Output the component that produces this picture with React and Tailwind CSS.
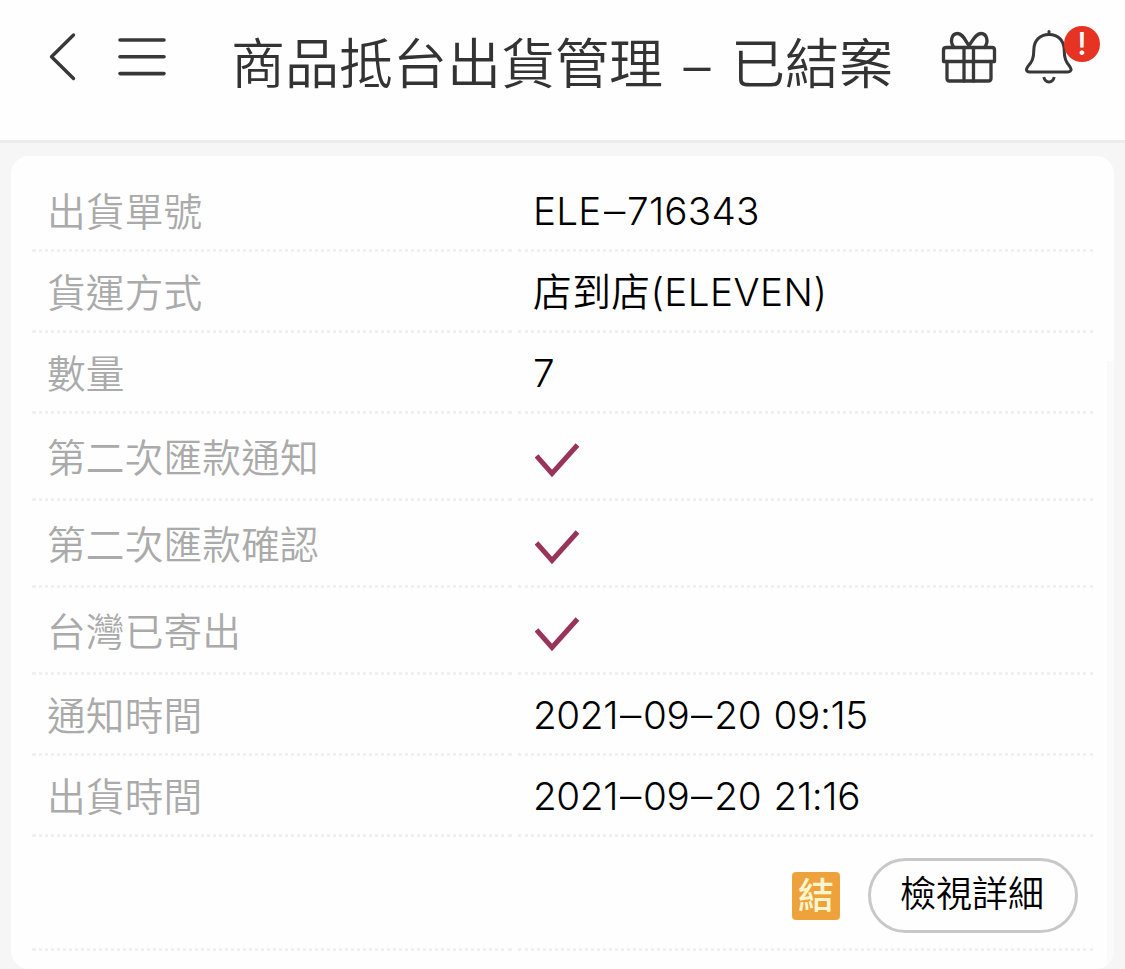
import React from "react";

const rows = [
    { label: "出貨單號", value: "ELE–716343", spacing: "tracking-[0.2px]" },
    { label: "貨運方式", value: "店到店(ELEVEN)", spacing: "tracking-[0.45px]" },
    { label: "數量", value: "7" },
    { label: "第二次匯款通知", done: true },
    { label: "第二次匯款確認", done: true },
    { label: "台灣已寄出", done: true },
    { label: "通知時間", value: "2021–09–20 09:15", spacing: "tracking-[-0.4px] [word-spacing:2px]" },
    { label: "出貨時間", value: "2021–09–20 21:16", spacing: "tracking-[-0.4px] [word-spacing:2px]" },
];

const BackIcon = () => (
    <svg width="28" height="50" viewBox="0 0 28 50" fill="none" stroke="#383838" strokeWidth="3.4" strokeLinecap="round" strokeLinejoin="round">
        <path d="M24.500 3L2.500 24.800L24.500 46.500" />
    </svg>
);

const MenuIcon = () => (
    <svg width="48" height="40" viewBox="0 0 48 40" fill="none" stroke="#383838" strokeWidth="3.6" strokeLinecap="round">
        <path d="M2 3H46M2 19.800H46M2 36.600H46" />
    </svg>
);

const GiftIcon = () => (
    <svg width="56" height="54" viewBox="0 0 56 54" fill="none" stroke="#383838" strokeWidth="3.300" strokeLinecap="round" strokeLinejoin="round">
        <path d="M5.500 18.500H51Q53.500 18.500 53.500 21V32.500H2.500V21Q2.500 18.500 5.500 18.500Z" />
        <path d="M6 32.500V49.500Q6 52 8.500 52H47Q50 52 50 49.500V32.500" />
        <path d="M23 18.500V52M32.500 18.500V52" />
        <path d="M13 18.500C8.500 13 10.500 4.500 16.500 4.500C22 4.500 24 11.500 28 16.500C32 11.500 34.500 4.500 40 4.500C46 4.500 48 13 43.500 18.500" />
    </svg>
);

const BellIcon = () => (
    <svg width="48" height="56" viewBox="0 0 48 56" fill="none" stroke="#383838" strokeWidth="3" strokeLinecap="round" strokeLinejoin="round">
        <path d="M24 6V3.500" />
        <path d="M24 6.500C14.500 6.500 8.800 13 8.800 22C8.800 30.500 7 34 2.800 38.500Q-0.500 43.500 4.500 44H43Q48 43.500 44.800 38.500C41 34 39.200 30.500 39.200 22C39.200 13 33.500 6.500 24 6.500Z" />
        <path d="M18.800 49C20.300 55.500 27.700 55.500 29.200 49" strokeLinecap="butt" />
    </svg>
);

const CheckIcon = () => (
    <svg width="46" height="37" viewBox="0 0 46 37" fill="none" stroke="#98345a" strokeWidth="5">
        <path d="M1.500 14L17 31.500L42.500 3" />
    </svg>
);

function Header() {
    return (
        <header className="flex h-[143px] items-start border-b-[3px] border-[#ebebeb] bg-[#fefefe] pl-[49px] text-[#333333]">
            <button className="mt-8 w-7 shrink-0"><BackIcon /></button>
            <button className="mt-[37px] ml-[41px] w-12 shrink-0"><MenuIcon /></button>
            <h1 className="mt-[25px] ml-[65px] flex h-20 w-[662px] shrink-0 items-center whitespace-nowrap text-[54px] leading-[80px]">
                <span>商品抵台出貨管理</span>
                <span className="w-[70px] pt-1 text-center">–</span>
                <span>已結案</span>
            </h1>
            <button className="mt-[29px] ml-[48px] w-14 shrink-0"><GiftIcon /></button>
            <button className="relative mt-7 ml-[28px] w-12 shrink-0">
                <BellIcon />
                <span className="absolute -top-0.5 left-[39px] flex h-9 w-9 items-center justify-center rounded-full bg-[#e63323] pb-0.5 text-[31px] leading-none font-medium text-white">!</span>
            </button>
        </header>
    );
}

// dashes are a little wider than the font's own
function Value({ text, className }) {
    const parts = text.split("–");
    return (
        <span className={className}>
            {parts.map((part, index) => (
                <React.Fragment key={index}>
                    {index > 0 && <span className="mr-[3px] ml-[3px] inline-block scale-x-110">–</span>}
                    {part}
                </React.Fragment>
            ))}
        </span>
    );
}

function Row({ label, value, done, spacing }) {
    return (
        <div className={done ? "flex h-[87px] gap-1.5" : "flex h-[81px] gap-1.5"}>
            <div className="flex w-[480px] items-center border-b-[3px] border-dotted border-[#f0f0f0] pt-1 pl-[15px] text-[#aaaaaa]">
                <span className="tracking-[0.15px]">{label}</span>
            </div>
            <div className="flex w-[575px] items-center border-b-[3px] border-dotted border-[#f0f0f0] pt-0.5 pl-[15px] text-black">
                {done ? <span className="mt-1.5 ml-0.5"><CheckIcon /></span> : <Value text={value} className={spacing} />}
            </div>
        </div>
    );
}

export default function App() {
    return (
        <div lang="zh-TW" className="h-[969px] w-[1125px] overflow-hidden bg-[#f6f6f6] font-['Inter','Noto_Sans_CJK_TC',sans-serif] font-[350]">
            <Header />
            <main className="relative mt-[13px] ml-[11px] h-[813px] w-[1103px] overflow-hidden rounded-[18px] bg-[#fefefe] pt-[15px] pl-[21px] text-[38.7px] leading-[60px]">
                {rows.map((row) => (
                    <Row key={row.label} {...row} />
                ))}
                <div className="flex h-[114px] gap-1.5">
                    <div className="w-[480px] border-b-[3px] border-dotted border-[#f0f0f0]" />
                    <div className="flex w-[575px] items-center justify-end border-b-[3px] border-dotted border-[#f0f0f0] pt-1.5 pr-[15px]">
                        <span className="mr-7 flex h-12 w-12 items-center justify-center rounded-[4px] bg-[#eea23c] text-[36px] leading-none font-medium text-[#fff6cf]">結</span>
                        <button className="flex h-[75px] w-[210px] items-center justify-center rounded-full border-[3px] border-[#c8c8c8] pr-0.5 pb-[3px] text-[36px] text-black">檢視詳細</button>
                    </div>
                </div>
                <div className="absolute top-[205px] right-0 h-[608px] w-[7px] bg-[#fafafa]" />
            </main>
        </div>
    );
}
